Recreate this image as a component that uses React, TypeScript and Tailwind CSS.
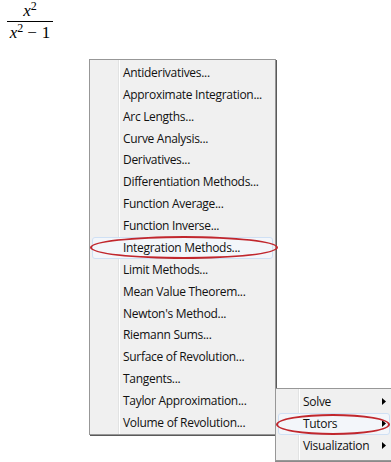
import React from "react";

const mainItems = [
  "Antiderivatives...",
  "Approximate Integration...",
  "Arc Lengths...",
  "Curve Analysis...",
  "Derivatives...",
  "Differentiation Methods...",
  "Function Average...",
  "Function Inverse...",
  "Integration Methods...",
  "Limit Methods...",
  "Mean Value Theorem...",
  "Newton's Method...",
  "Riemann Sums...",
  "Surface of Revolution...",
  "Tangents...",
  "Taylor Approximation...",
  "Volume of Revolution...",
];

const subItems = ["Solve", "Tutors", "Visualization"];

function Arrow() {
  return (
    <svg width="4" height="7" viewBox="0 0 4 7" className="absolute right-[6px] top-[7px]">
      <path d="M0 0 L4 3.5 L0 7 Z" fill="#000" />
    </svg>
  );
}

export default function App() {
  return (
    <div
      className="relative w-[391px] h-[462px] bg-white overflow-hidden pl-[7px] pt-[2px]"
      style={{ fontFamily: '"Open Sans", "Noto Sans", sans-serif' }}
    >
      {/* Fraction */}
      <div
        className="flex flex-col items-center w-[46px] text-[17px] leading-none text-black"
        style={{ fontFamily: '"Liberation Serif", serif' }}
      >
        <div className="h-[19px] flex items-end pb-[2px]">
          <span className="italic">x</span>
          <span className="text-[12px] relative -top-[7px]">2</span>
        </div>
        <div className="w-full h-px bg-black" />
        <div className="h-[20px] flex items-end pb-[1px]">
          <span className="italic">x</span>
          <span className="text-[12px] relative -top-[7px]">2</span>
          <span className="ml-[4px]">−</span>
          <span className="ml-[5px]">1</span>
        </div>
      </div>

      {/* Main menu */}
      <div className="absolute left-[89px] top-[59px] w-[187px] border border-[#979797] bg-[#f0f0f0] pt-[2px] shadow-[1px_1px_0_#5a5a5a]">
        <div className="absolute left-[28px] top-0 bottom-0 w-px bg-[#e2e3e3]" />
        <div className="absolute left-[29px] top-0 bottom-0 w-px bg-white" />
        <div className="flex flex-col">
          {mainItems.map((t) => (
            <div
              key={t}
              className="relative h-[21.875px] flex items-center pl-[33px] text-[12px] tracking-[-0.3px] text-[#111] whitespace-nowrap"
            >
              {t === "Integration Methods..." && (
                <div className="absolute left-[2px] right-[2px] top-0 bottom-0 rounded-[3px] border border-[#cfe0f4] bg-[#f3f6fa]" />
              )}
              <span className="relative">{t}</span>
            </div>
          ))}
        </div>
      </div>

      {/* Sub menu */}
      <div className="absolute left-[275px] top-[388px] w-[120px] h-[73px] border border-[#979797] bg-[#f0f0f0] pt-[2px] shadow-[0_1px_0_#8a8a8a]">
        <div className="absolute left-[22px] top-0 bottom-0 w-px bg-[#e2e3e3]" />
        <div className="absolute left-[23px] top-0 bottom-0 w-px bg-white" />
        <div className="flex flex-col">
          {subItems.map((t) => (
            <div
              key={t}
              className="relative h-[22px] flex items-center pl-[27px] text-[12px] tracking-[-0.3px] text-[#111] whitespace-nowrap w-[116px]"
            >
              {t === "Tutors" && (
                <div className="absolute left-[2px] right-[2px] top-0 bottom-0 rounded-[3px] border border-[#cfe0f4] bg-[#f3f6fa]" />
              )}
              <span className="relative">{t}</span>
              <Arrow />
            </div>
          ))}
        </div>
      </div>

      {/* Red annotation ellipses */}
      <div className="absolute left-[90px] top-[236px] w-[188px] h-[23px] rounded-[50%] border-2 border-[#c1272d]" />
      <div className="absolute left-[276px] top-[414px] w-[114px] h-[21px] rounded-[50%] border-2 border-[#c1272d]" />
    </div>
  );
}
